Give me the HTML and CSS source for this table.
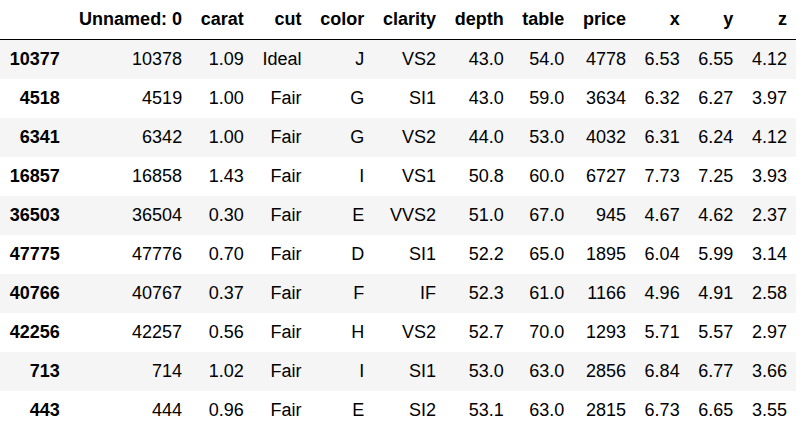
FILE: index.html
```html
<!DOCTYPE html>
<html>
<head>
<meta charset="utf-8">
<link rel="stylesheet" href="styles.css">
</head>
<body>
<table class="dataframe">
<thead>
<tr><th></th><th>Unnamed: 0</th><th>carat</th><th>cut</th><th>color</th><th>clarity</th><th>depth</th><th>table</th><th>price</th><th>x</th><th>y</th><th>z</th></tr>
</thead>
<tbody>
<tr><th>10377</th><td>10378</td><td>1.09</td><td>Ideal</td><td>J</td><td>VS2</td><td>43.0</td><td>54.0</td><td>4778</td><td>6.53</td><td>6.55</td><td>4.12</td></tr>
<tr><th>4518</th><td>4519</td><td>1.00</td><td>Fair</td><td>G</td><td>SI1</td><td>43.0</td><td>59.0</td><td>3634</td><td>6.32</td><td>6.27</td><td>3.97</td></tr>
<tr><th>6341</th><td>6342</td><td>1.00</td><td>Fair</td><td>G</td><td>VS2</td><td>44.0</td><td>53.0</td><td>4032</td><td>6.31</td><td>6.24</td><td>4.12</td></tr>
<tr><th>16857</th><td>16858</td><td>1.43</td><td>Fair</td><td>I</td><td>VS1</td><td>50.8</td><td>60.0</td><td>6727</td><td>7.73</td><td>7.25</td><td>3.93</td></tr>
<tr><th>36503</th><td>36504</td><td>0.30</td><td>Fair</td><td>E</td><td>VVS2</td><td>51.0</td><td>67.0</td><td>945</td><td>4.67</td><td>4.62</td><td>2.37</td></tr>
<tr><th>47775</th><td>47776</td><td>0.70</td><td>Fair</td><td>D</td><td>SI1</td><td>52.2</td><td>65.0</td><td>1895</td><td>6.04</td><td>5.99</td><td>3.14</td></tr>
<tr><th>40766</th><td>40767</td><td>0.37</td><td>Fair</td><td>F</td><td>IF</td><td>52.3</td><td>61.0</td><td>1166</td><td>4.96</td><td>4.91</td><td>2.58</td></tr>
<tr><th>42256</th><td>42257</td><td>0.56</td><td>Fair</td><td>H</td><td>VS2</td><td>52.7</td><td>70.0</td><td>1293</td><td>5.71</td><td>5.57</td><td>2.97</td></tr>
<tr><th>713</th><td>714</td><td>1.02</td><td>Fair</td><td>I</td><td>SI1</td><td>53.0</td><td>63.0</td><td>2856</td><td>6.84</td><td>6.77</td><td>3.66</td></tr>
<tr><th>443</th><td>444</td><td>0.96</td><td>Fair</td><td>E</td><td>SI2</td><td>53.1</td><td>63.0</td><td>2815</td><td>6.73</td><td>6.65</td><td>3.55</td></tr>
</tbody>
</table>
</body>
</html>
```

FILE: styles.css
```css
html, body {
  margin: 0;
  padding: 0;
  background: #fff;
}
body {
  font-family: "Liberation Sans", Arial, sans-serif;
  font-size: 18px;
  color: #000;
}
.dataframe {
  width: 796px;
  border-collapse: collapse;
  border-spacing: 0;
  border: none;
  color: #000;
  font-size: 18px;
  table-layout: auto;
}
.dataframe thead {
  border-bottom: 1px solid #000;
  vertical-align: bottom;
}
.dataframe th,
.dataframe td {
  text-align: right;
  vertical-align: middle;
  padding: 9px 9px;
  line-height: normal;
  white-space: nowrap;
  border: none;
}
.dataframe th {
  font-weight: bold;
}
.dataframe tbody tr:nth-child(odd) {
  background: #f5f5f5;
}
```
